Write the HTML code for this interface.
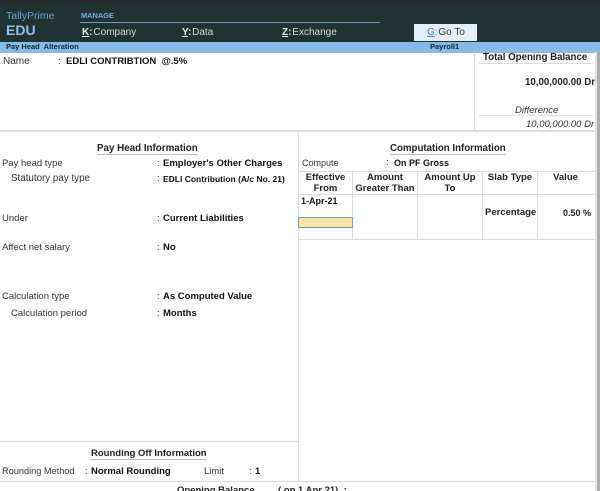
<!DOCTYPE html>
<html><head><meta charset="utf-8">
<style>
html,body{margin:0;padding:0;background:#fff}
#p{position:relative;width:600px;height:491px;overflow:hidden;background:#fff;font-family:"Liberation Sans",sans-serif;font-size:9.5px;color:#222;filter:blur(.35px)}
#p div{position:absolute;white-space:nowrap;line-height:12px}
.b{font-weight:bold;color:#111}
.l{background:#dcdcdc}
.g{color:#333}
.u{text-decoration:underline;text-underline-offset:3px;text-decoration-color:#bbb}
.m{color:#d6dcdc;font-size:10px}
.m b{color:#e8eef0}
.m b:first-child{text-decoration:underline}
</style></head><body><div id="p">
<div class="b" style="left:483px;top:52px;font-size:9.7px;color:#222">Total Opening Balance</div>
<div style="left:0;top:0;width:600px;height:42px;background:#213233"></div>
<div style="left:0;top:0;width:600px;height:2px;background:#2a2a2a"></div>
<div style="left:0;top:42px;width:600px;height:11px;background:#86bbe6"></div>

<div style="left:6px;top:10px;font-size:10.5px;color:#6fa3c9">TallyPrime</div>
<div style="left:6px;top:23px;font-size:14px;font-weight:bold;color:#8fc3ea;line-height:14px">EDU</div>
<div style="left:81px;top:11px;font-size:7.4px;font-weight:bold;color:#7fb0d6;line-height:10px">MANAGE</div>
<div style="left:80px;top:22px;width:300px;height:1px;background:#6d9fc4"></div>
<div class="m" style="left:82px;top:27px"><b>K</b><b>:</b>&#8202;Company</div>
<div class="m" style="left:182px;top:27px"><b>Y</b><b>:</b>&#8202;Data</div>
<div class="m" style="left:282px;top:27px"><b>Z</b><b>:</b>&#8202;Exchange</div>
<div style="left:414px;top:24px;width:63px;height:17px;background:#e3f0fb"></div>
<div style="left:427px;top:27px;font-size:10px;color:#333"><span style="color:#3f78ad;text-decoration:underline">G</span><span style="color:#3f78ad">:</span>&#8202;Go To</div>

<div style="left:6px;top:41px;font-size:7.5px;font-weight:bold;color:#14232c">Pay Head&nbsp; Alteration</div>
<div style="left:430px;top:41px;font-size:7.5px;font-weight:bold;color:#14232c">Payroll1</div>

<div class="g" style="left:3px;top:56px;font-size:10px">Name</div>
<div class="g" style="left:58px;top:56px">:</div>
<div class="b" style="left:66px;top:56px;font-size:9.5px">EDLI CONTRIBTION&nbsp; @.5%</div>

<div class="l" style="left:474px;top:52px;width:1px;height:79px"></div>
<div class="l" style="left:479px;top:63px;width:114px;height:1px"></div>
<div class="l" style="left:479px;top:115px;width:114px;height:1px"></div>
<div class="b" style="left:525px;top:77px;font-size:9.7px;color:#222">10,00,000.00 Dr</div>
<div class="g" style="left:515px;top:105px;font-style:italic">Difference</div>
<div class="g" style="left:526px;top:119px;font-style:italic;width:68px;overflow:hidden">10,00,000.00 Dr</div>

<div class="l" style="left:0;top:130px;width:595px;height:2px"></div>
<div class="l" style="left:298px;top:131px;width:1px;height:350px"></div>
<div style="left:597px;top:52px;width:3px;height:439px;background:#a9adb0"></div>
<div style="left:595px;top:52px;width:2px;height:439px;background:#e4e4e4"></div>

<div class="b u" style="left:97px;top:143px;font-size:9.8px;color:#222">Pay Head Information</div>
<div class="g" style="left:2px;top:158px">Pay head type</div>
<div class="g" style="left:157px;top:158px">:</div>
<div class="b" style="left:163px;top:158px">Employer's Other Charges</div>
<div class="g" style="left:11px;top:173px;font-size:9.8px">Statutory pay type</div>
<div class="g" style="left:157px;top:173px">:</div>
<div class="b" style="left:163px;top:173px;font-size:8.5px">EDLI Contribution (A/c No. 21)</div>
<div class="g" style="left:2px;top:213px">Under</div>
<div class="g" style="left:157px;top:213px">:</div>
<div class="b" style="left:163px;top:213px">Current Liabilities</div>
<div class="g" style="left:2px;top:242px">Affect net salary</div>
<div class="g" style="left:157px;top:242px">:</div>
<div class="b" style="left:163px;top:242px">No</div>
<div class="g" style="left:2px;top:291px">Calculation type</div>
<div class="g" style="left:157px;top:291px">:</div>
<div class="b" style="left:163px;top:291px">As Computed Value</div>
<div class="g" style="left:11px;top:308px">Calculation period</div>
<div class="g" style="left:157px;top:308px">:</div>
<div class="b" style="left:163px;top:308px">Months</div>

<div class="b u" style="left:390px;top:143px;font-size:9.7px;color:#222">Computation Information</div>
<div class="g" style="left:302px;top:157px;font-size:9px">Compute</div>
<div class="g" style="left:386px;top:157px">:</div>
<div class="b" style="left:394px;top:157px;font-size:9px">On PF Gross</div>

<div class="l" style="left:299px;top:171px;width:296px;height:1px"></div>
<div class="l" style="left:299px;top:194px;width:296px;height:1px"></div>
<div class="l" style="left:299px;top:239px;width:296px;height:1px"></div>
<div class="l" style="left:352px;top:172px;width:1px;height:67px"></div>
<div class="l" style="left:417px;top:172px;width:1px;height:67px"></div>
<div class="l" style="left:482px;top:172px;width:1px;height:67px"></div>
<div class="l" style="left:537px;top:172px;width:1px;height:67px"></div>

<div class="b" style="left:299px;top:172px;width:53px;text-align:center;line-height:11px;color:#222">Effective<br>From</div>
<div class="b" style="left:353px;top:172px;width:64px;text-align:center;line-height:11px;color:#222">Amount<br>Greater Than</div>
<div class="b" style="left:418px;top:172px;width:64px;text-align:center;line-height:11px;color:#222">Amount Up<br>To</div>
<div class="b" style="left:483px;top:172px;width:54px;text-align:center;line-height:11px;color:#222">Slab Type</div>
<div class="b" style="left:538px;top:172px;width:55px;text-align:center;line-height:11px;color:#222">Value</div>
<div class="b" style="left:301px;top:195px;font-size:9px">1-Apr-21</div>
<div class="b" style="left:485px;top:207px;font-size:9.5px;color:#222">Percentage</div>
<div class="b" style="left:563px;top:207px;font-size:9px;color:#222">0.50 %</div>
<div style="left:298px;top:217px;width:53px;height:9px;background:#fde2a6;border:1px solid #6fa5b0"></div>

<div class="l" style="left:0;top:441px;width:298px;height:1px"></div>
<div class="b u" style="left:91px;top:448px;font-size:9.5px;color:#222">Rounding Off Information</div>
<div class="g" style="left:2px;top:465px;font-size:9.2px">Rounding Method</div>
<div class="g" style="left:85px;top:466px">:</div>
<div class="b" style="left:91px;top:466px">Normal Rounding</div>
<div class="g" style="left:204px;top:466px">Limit</div>
<div class="g" style="left:249px;top:466px">:</div>
<div class="b" style="left:255px;top:466px">1</div>

<div class="l" style="left:0;top:481px;width:595px;height:1px"></div>
<div class="b" style="left:177px;top:485px;font-size:9.5px;color:#222">Opening Balance</div>
<div class="b" style="left:278px;top:485px;font-size:9.5px;color:#222">( on 1 Apr 21)&nbsp; :</div>
</div></body></html>
